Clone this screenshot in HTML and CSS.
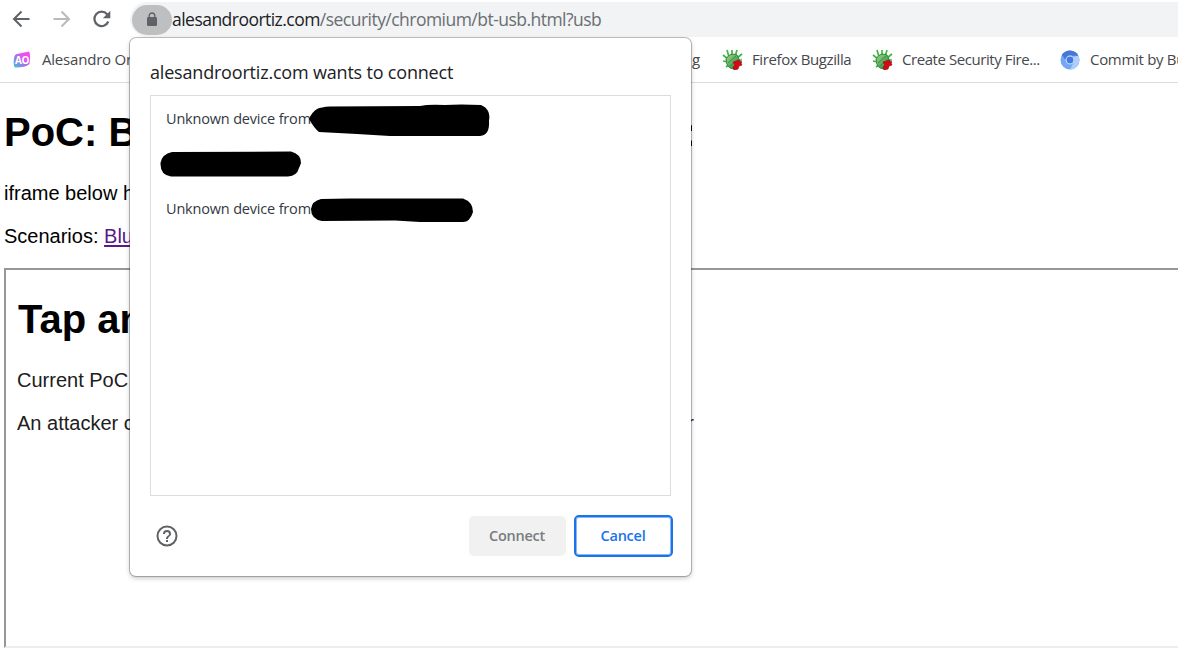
FILE: index.html
```html
<!DOCTYPE html>
<html lang="en">
<head>
<meta charset="utf-8">
<title>PoC</title>
<link rel="stylesheet" href="styles.css">
</head>
<body>
<svg class="defs" width="0" height="0" aria-hidden="true">
  <defs>
    <linearGradient id="ao" x1="0" y1="1" x2="1" y2="0"><stop offset="0" stop-color="#35c5dc"/><stop offset=".4" stop-color="#a474e8"/><stop offset=".7" stop-color="#f04cf0"/><stop offset="1" stop-color="#ef55ee"/></linearGradient>
    <linearGradient id="bugfill" x1="0" y1="0" x2="1" y2="1"><stop offset="0" stop-color="#a0d989"/><stop offset="1" stop-color="#287b37"/></linearGradient>
    <symbol id="bug" viewBox="0 0 21 21">
      <path d="M1 6l5 4M1 12l5 1M4 18l4-3M5 1l2 7M10 1v6M15 1l-2 7M20 5l-5 4M20 11h-4" fill="none" stroke="#43b545" stroke-width="1.7"/>
      <path d="M4 10Q8 3 15 6Q21 15 13 20Q4 20 4 10Z" fill="url(#bugfill)" stroke="#278a3c"/>
      <path d="M6 14L14 7M8 17l7-6" stroke="#388f45" fill="none"/>
      <path d="M11 13l4-1 1-1 4 2-1 1 1 2-3 1-1 3-4 1-1-3 2-2z" fill="#d90712" stroke="#8e1516" stroke-width=".7"/>
    </symbol>
  </defs>
</svg>
<header class="toolbar">
  <nav class="nav">
    <svg width="20" height="20" viewBox="0 0 20 20"><path d="M18.500 10H3.500M10.500 2.500L3 10l7.500 7.500" fill="none" stroke="#5f6368" stroke-width="2"/></svg>
    <svg width="20" height="20" viewBox="0 0 20 20"><path d="M2.500 10h15M10.500 2.500l7.500 7.500-7.500 7.500" fill="none" stroke="#bababc" stroke-width="2"/></svg>
    <svg width="20" height="20" viewBox="0 0 20 20"><path d="M17.300 12.500A7.200 7.200 0 1 1 16.100 5.200L18 7.500" fill="none" stroke="#5f6368" stroke-width="2.200"/><path d="M19.300 1.800v7.500h-7.500z" fill="#5f6368"/></svg>
  </nav>
  <div class="omnibox">
    <span class="lock"><svg width="12" height="15" viewBox="0 0 12 15"><rect x="1" y="5" width="10" height="9" rx="1.200" fill="#5f6368"/><path d="M3.200 6V3.800a2.800 2.800 0 0 1 5.600 0V6" fill="none" stroke="#5f6368" stroke-width="1.400"/></svg></span>
    <span class="url"><b class="host">alesandroortiz.com</b>/security/chromium/bt-usb.html?usb</span>
  </div>
</header>
<div class="bookmarks">
  <div class="bookmark first"><svg width="18" height="18" viewBox="0 0 18 18"><path d="M4 3L16 .5Q18 3 16.500 13Q13 16.500 2 16.500Q0 15 1 7Q2 3 4 3Z" fill="url(#ao)"/><text class="ao" x="9" y="12.500" text-anchor="middle">AO</text></svg><span>Alesandro Or</span></div>
  <div class="bookmark tail"><span>g</span></div>
  <div class="bookmark firefox"><svg width="21" height="21"><use href="#bug"/></svg><span>Firefox Bugzilla</span></div>
  <div class="bookmark create"><svg width="21" height="21"><use href="#bug"/></svg><span>Create Security Fire...</span></div>
  <div class="bookmark commit"><svg width="20" height="20" viewBox="0 0 20 20"><circle cx="10" cy="10" r="9.500" fill="#75a5f5"/><path d="M1.800 5A9.500 9.500 0 0 1 18.400 5.700H10A4.300 4.300 0 0 0 5.700 10z" fill="#4777d5"/><path d="M18.400 5.700A9.500 9.500 0 0 1 10 19.500l4-7.500q1-3-1.200-5.300z" fill="#adcdfb"/><circle cx="10" cy="10" r="4.400" fill="#d6e5ff"/><circle cx="10" cy="10" r="3.400" fill="#427be0"/></svg><span>Commit by Bu</span></div>
</div>
<main class="page">
  <h1 class="title"><span>PoC: B</span><span>:</span></h1>
  <p class="intro">iframe below h</p>
  <p class="scenarios">Scenarios: <a class="link">Blu</a></p>
  <section class="frame">
    <h1 class="frame-title">Tap an</h1>
    <p class="current">Current PoC</p>
    <p class="attacker"><span>An attacker c</span><span>r</span></p>
  </section>
</main>
<div class="dialog">
  <h2 class="dialog-title">alesandroortiz.com wants to connect</h2>
  <div class="devices">
    <div class="device">Unknown device from</div>
    <div class="device"></div>
    <div class="device">Unknown device from</div>
    <svg class="marks" width="360" height="150" viewBox="140 90 360 150">
      <path d="M309 119Q312 112 317 109Q321 107 330 106.500L420 106Q429 104 445 105Q460 104 481 105Q491 109 489 121Q490 135 480 136H390L357 134L319 132Q314 128 309 119Z"/>
      <path d="M172 152L291 151.500Q301 154 301 163Q300 166 299 168Q297 176 288 176.500H171Q160 175 160.500 163Q162 154 172 152Z"/>
      <path d="M321 199L350 198.500 463 198.500Q473 202 473 212Q470 222 463 222H420L395 220.500 322 221Q311 219 311 209Q312 201 321 199Z"/>
    </svg>
  </div>
  <div class="actions">
    <svg class="help" width="24" height="24" viewBox="0 0 24 24" fill="#5f6368"><path d="M11 18h2v-2h-2zm1-16.500a10.500 10.500 0 1 0 0 21 10.500 10.500 0 0 0 0-21m0 19a8.500 8.500 0 1 1 0-17 8.500 8.500 0 0 1 0 17M12 6a4 4 0 0 0-4 4h2c0-1.100.9-2 2-2s2 .9 2 2c0 2-3 1.750-3 5h2c0-2.250 3-2.500 3-5a4 4 0 0 0-4-4"/></svg>
    <button class="button connect">Connect</button>
    <button class="button cancel">Cancel</button>
  </div>
</div>
</body>
</html>
```
FILE: styles.css
```css
* { box-sizing: border-box; }
body { margin: 0; width: 1178px; height: 662px; overflow: hidden; position: relative; background: #fff; color: #000; font-family: "Liberation Sans", Arial, sans-serif; }
h1, h2, p { margin: 0; }
svg { display: block; flex: none; }
.defs { position: absolute; }
.toolbar { display: flex; height: 37px; padding-top: 2px; }
.nav { display: flex; gap: 20px; width: 130px; padding: 7px 0 0 11px; flex: none; }
.omnibox { flex: 1; display: flex; align-items: center; height: 35px; background: #f1f3f4; border-radius: 18px 0 0 18px; padding-left: 2px; }
.lock { width: 40px; height: 30px; border-radius: 15px; background: #bebfc1; display: flex; align-items: center; justify-content: center; flex: none; }
.url { font: 17.500px "Open Sans", sans-serif; letter-spacing: -.53px; color: #6b6e72; white-space: nowrap; padding-bottom: 2px; }
.host { font-weight: 400; color: #202124; }
.bookmarks { display: flex; align-items: center; height: 46px; border-bottom: 1px solid #dadce0; font: 15px "Open Sans", sans-serif; color: #45484c; white-space: nowrap; overflow: hidden; }
.bookmark { display: flex; align-items: center; flex: none; letter-spacing: -.4px; }
.bookmark span { padding-bottom: 2px; }
.first { padding-left: 13px; gap: 11px; width: 692px; letter-spacing: -.2px; }
.tail { width: 30px; }
.firefox, .create { gap: 9px; width: 150px; }
.create { width: 188px; letter-spacing: -.43px; }
.commit { gap: 10px; letter-spacing: -.3px; }
.ao { font: bold 10px "Open Sans", sans-serif; fill: #fff; letter-spacing: -.4px; }
.page { padding: 26px 0 0 4px; font-size: 20px; }
.title, .frame-title { font-size: 40px; line-height: 46px; font-weight: bold; }
.title { display: flex; justify-content: space-between; width: 692px; clip-path: inset(0 4px 0 0); }
.intro { line-height: 24px; margin-top: 26px; }
.scenarios { line-height: 24px; margin-top: 19px; }
.link { color: #551a8b; text-decoration: underline; text-underline-offset: 2px; text-decoration-thickness: 2px; }
.frame { height: 380px; margin-top: 20px; border: 2px solid; border-color: #979797 transparent #ededed #979797; border-right: 0; padding: 26px 0 0 11px; }
.frame-title { padding-left: 1px; }
.current { line-height: 24px; margin-top: 26px; }
.attacker { display: flex; justify-content: space-between; width: 677px; line-height: 24px; margin-top: 19px; }
.current, .attacker { color: #202020; }
.dialog { position: absolute; left: 130px; top: 38px; width: 561px; height: 538px; padding: 20px; background: #fff; border-radius: 6px; box-shadow: 0 0 0 1px rgba(0,0,0,.24), 0 2px 5px 0 rgba(60,64,67,.32); font-family: "Open Sans", sans-serif; }
.dialog-title { font-size: 18px; line-height: 28px; font-weight: 400; letter-spacing: -.19px; color: #202124; white-space: nowrap; }
.devices { position: relative; width: 521px; height: 401px; margin-top: 9px; border: 1px solid #dadce0; padding: 1px 0 0 15px; }
.device { height: 45px; line-height: 43px; font-size: 14.500px; color: #333943; letter-spacing: -.18px; white-space: nowrap; }
.marks { position: absolute; left: -11px; top: -6px; }
.actions { display: flex; align-items: center; height: 42px; margin-top: 19px; width: 523px; }
.help { margin: 0 auto 0 5px; }
.button { height: 40px; border: 0; border-radius: 5px; font: 600 14.500px "Open Sans", sans-serif; letter-spacing: -.25px; padding: 0 1px 2px 0; }
.connect { width: 97px; background: #f1f1f1; color: #797c80; margin-right: 8px; }
.cancel { width: 99px; height: 42px; background: #fff; color: #1a73e8; border: 2px solid #1a73e8; box-shadow: inset 0 0 0 1px #8ab6f4; }
```
